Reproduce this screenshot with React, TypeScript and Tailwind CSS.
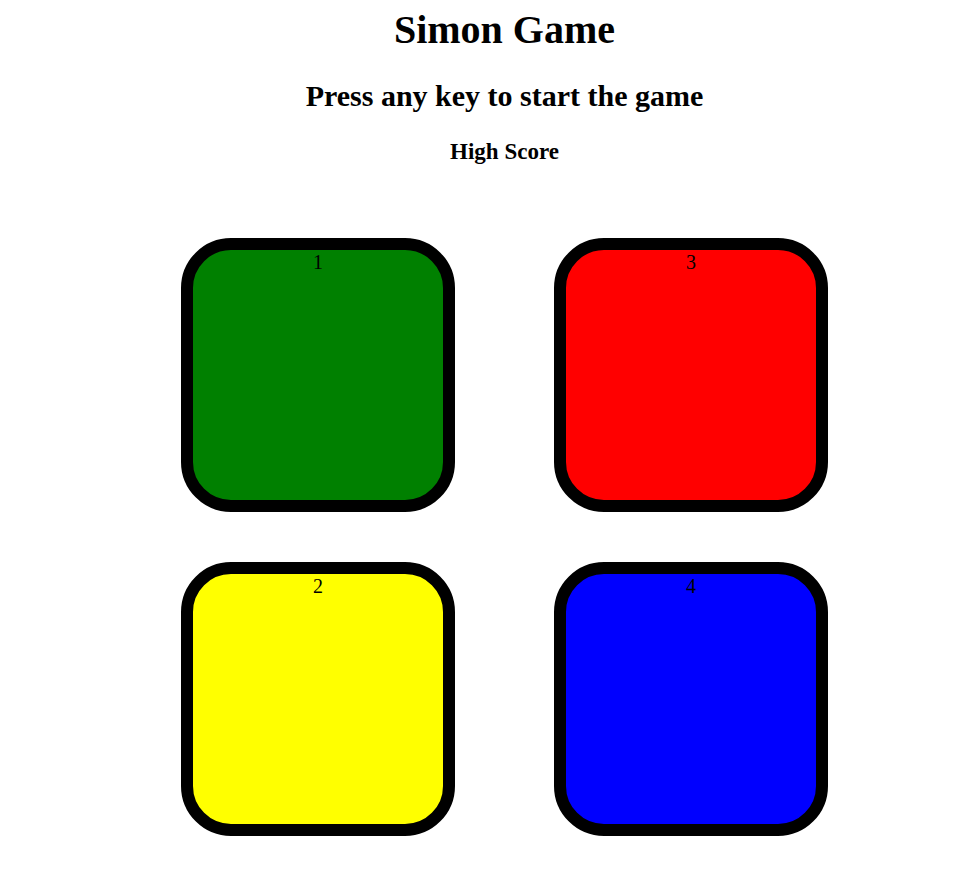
import React from "react";

const boxes = [
  { n: "1", bg: "bg-[#008000]" },
  { n: "3", bg: "bg-[#ff0000]" },
  { n: "2", bg: "bg-[#ffff00]" },
  { n: "4", bg: "bg-[#0000ff]" },
];

export default function App() {
  return (
    <div
      className="min-h-[879px] bg-white text-black pl-[40px] text-center"
      style={{ fontFamily: '"Liberation Serif", "Times New Roman", serif' }}
    >
      <h1 className="pt-[7px] text-[40px] leading-[46px] font-bold">Simon Game</h1>
      <h2 className="mt-[26px] text-[30px] leading-[34px] font-bold">Press any key to start the game</h2>
      <h3 className="mt-[26px] text-[23px] leading-[26px] font-bold">High Score</h3>
      <div className="mt-[73px] grid grid-cols-[274px_274px] justify-center gap-x-[99px] gap-y-[50px]">
        {boxes.map((b) => (
          <div
            key={b.n}
            className={`h-[274px] w-[274px] rounded-[50px] border-[12px] border-black ${b.bg} pt-[1px] text-[20px] leading-[23px]`}
          >
            {b.n}
          </div>
        ))}
      </div>
    </div>
  );
}
